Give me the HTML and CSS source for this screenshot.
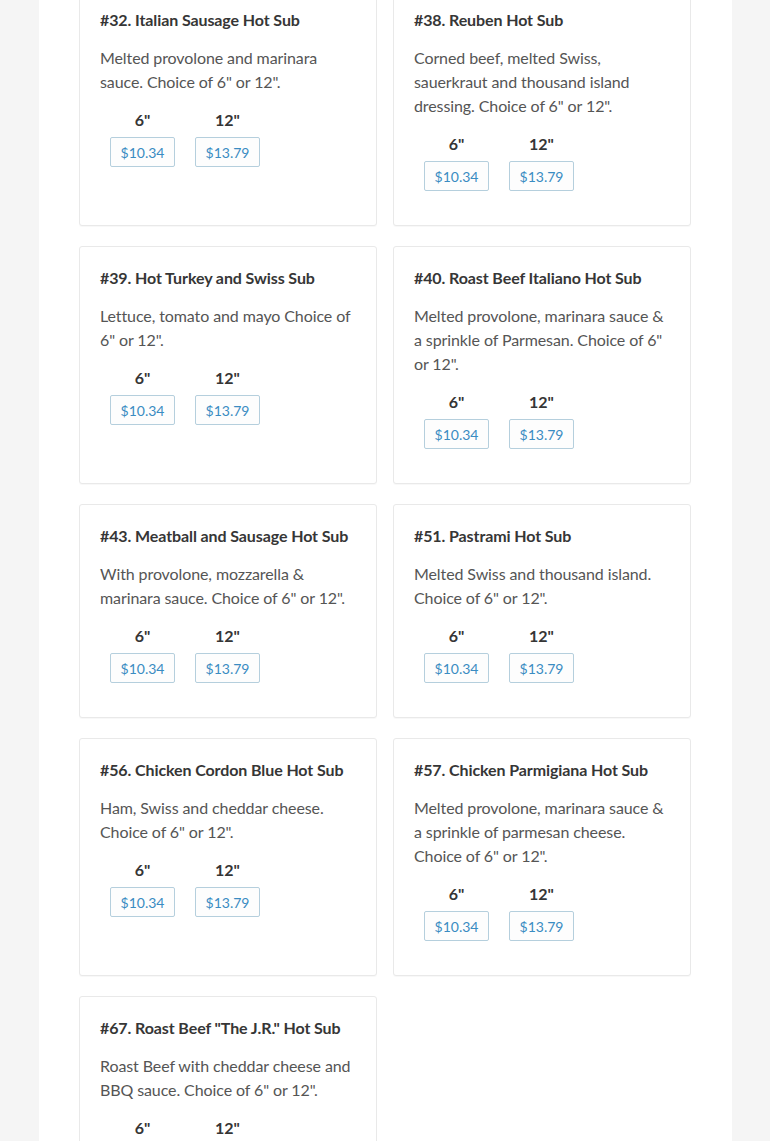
FILE: index.html
```html
<!DOCTYPE html>
<html>
<head>
<meta charset="utf-8">
<link rel="stylesheet" href="styles.css">
</head>
<body>
<div class="page">
  <div class="grid">
    <div class="card">
      <h3 class="title">#32. Italian Sausage Hot Sub</h3>
      <p class="desc">Melted provolone and marinara sauce. Choice of 6" or 12".</p>
      <div class="prices">
        <div class="price"><div class="size">6"</div><button class="btn">$10.34</button></div>
        <div class="price"><div class="size">12"</div><button class="btn">$13.79</button></div>
      </div>
    </div>
    <div class="card">
      <h3 class="title">#38. Reuben Hot Sub</h3>
      <p class="desc">Corned beef, melted Swiss, sauerkraut and thousand island dressing. Choice of 6" or 12".</p>
      <div class="prices">
        <div class="price"><div class="size">6"</div><button class="btn">$10.34</button></div>
        <div class="price"><div class="size">12"</div><button class="btn">$13.79</button></div>
      </div>
    </div>
    <div class="card">
      <h3 class="title">#39. Hot Turkey and Swiss Sub</h3>
      <p class="desc">Lettuce, tomato and mayo Choice of 6" or 12".</p>
      <div class="prices">
        <div class="price"><div class="size">6"</div><button class="btn">$10.34</button></div>
        <div class="price"><div class="size">12"</div><button class="btn">$13.79</button></div>
      </div>
    </div>
    <div class="card">
      <h3 class="title">#40. Roast Beef Italiano Hot Sub</h3>
      <p class="desc">Melted provolone, marinara sauce &amp; a sprinkle of Parmesan. Choice of 6" or 12".</p>
      <div class="prices">
        <div class="price"><div class="size">6"</div><button class="btn">$10.34</button></div>
        <div class="price"><div class="size">12"</div><button class="btn">$13.79</button></div>
      </div>
    </div>
    <div class="card">
      <h3 class="title">#43. Meatball and Sausage Hot Sub</h3>
      <p class="desc">With provolone, mozzarella &amp; marinara sauce. Choice of 6" or 12".</p>
      <div class="prices">
        <div class="price"><div class="size">6"</div><button class="btn">$10.34</button></div>
        <div class="price"><div class="size">12"</div><button class="btn">$13.79</button></div>
      </div>
    </div>
    <div class="card">
      <h3 class="title">#51. Pastrami Hot Sub</h3>
      <p class="desc">Melted Swiss and thousand island. Choice of 6" or 12".</p>
      <div class="prices">
        <div class="price"><div class="size">6"</div><button class="btn">$10.34</button></div>
        <div class="price"><div class="size">12"</div><button class="btn">$13.79</button></div>
      </div>
    </div>
    <div class="card">
      <h3 class="title">#56. Chicken Cordon Blue Hot Sub</h3>
      <p class="desc">Ham, Swiss and cheddar cheese. Choice of 6" or 12".</p>
      <div class="prices">
        <div class="price"><div class="size">6"</div><button class="btn">$10.34</button></div>
        <div class="price"><div class="size">12"</div><button class="btn">$13.79</button></div>
      </div>
    </div>
    <div class="card">
      <h3 class="title">#57. Chicken Parmigiana Hot Sub</h3>
      <p class="desc">Melted provolone, marinara sauce &amp; a sprinkle of parmesan cheese. Choice of 6" or 12".</p>
      <div class="prices">
        <div class="price"><div class="size">6"</div><button class="btn">$10.34</button></div>
        <div class="price"><div class="size">12"</div><button class="btn">$13.79</button></div>
      </div>
    </div>
    <div class="card">
      <h3 class="title">#67. Roast Beef "The J.R." Hot Sub</h3>
      <p class="desc">Roast Beef with cheddar cheese and BBQ sauce. Choice of 6" or 12".</p>
      <div class="prices">
        <div class="price"><div class="size">6"</div><button class="btn">$10.34</button></div>
        <div class="price"><div class="size">12"</div><button class="btn">$13.79</button></div>
      </div>
    </div>
  </div>
</div>
</body>
</html>
```
FILE: styles.css
```css
html, body {
  margin: 0;
  padding: 0;
  background: #f5f5f5;
  font-family: Lato, "Open Sans", sans-serif;
  overflow: hidden;
}
.page {
  width: 613px;
  margin: -12px 0 0 39px;
  padding: 0 40px 40px;
  background: #ffffff;
  min-height: 1200px;
}
.grid {
  display: grid;
  grid-template-columns: 298px 298px;
  column-gap: 16px;
  row-gap: 20px;
}
.card {
  border: 1px solid #e9e9e9;
  border-radius: 3px;
  box-shadow: 0 1px 1px rgba(0,0,0,0.03);
  padding: 20px 20px 34px;
  background: #fff;
}
.title {
  margin: 0 0 15px;
  font-size: 16px;
  line-height: 22px;
  font-weight: 700;
  color: #363636;
  letter-spacing: -0.1px;
}
.desc {
  margin: 0 0 15px;
  font-size: 16px;
  line-height: 24px;
  color: #555555;
  letter-spacing: -0.1px;
}
.prices {
  display: flex;
  padding-left: 10px;
  gap: 20px;
}
.price {
  display: flex;
  flex-direction: column;
  align-items: center;
}
.size {
  font-size: 16px;
  line-height: 22px;
  font-weight: 700;
  color: #363636;
  margin-bottom: 6px;
}
.btn {
  width: 65px;
  height: 30px;
  padding: 0;
  border: 1px solid #b5cfdd;
  border-radius: 2px;
  background: #fdfdfd;
  color: #3a8cc2;
  font-family: Lato, "Open Sans", sans-serif;
  font-size: 14px;
  font-weight: 400;
}
```
